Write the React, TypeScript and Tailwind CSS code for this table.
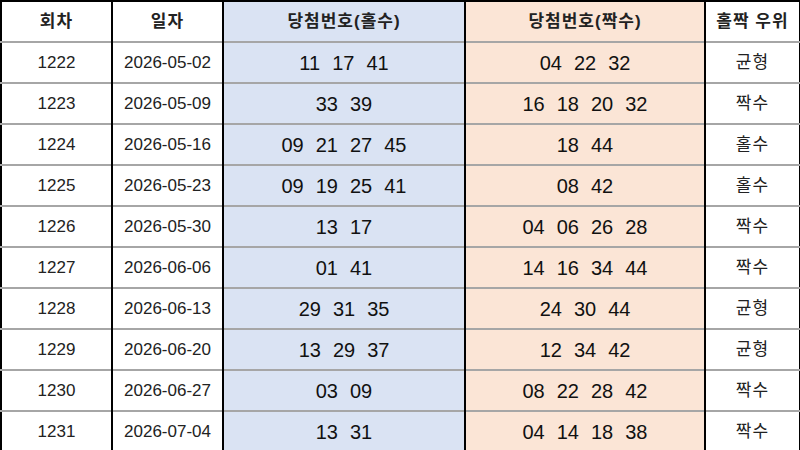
const rows = [
  { no: 1222, date: '2026-05-02', odd: ['11', '17', '41'], even: ['04', '22', '32'], result: '균형' },
  { no: 1223, date: '2026-05-09', odd: ['33', '39'], even: ['16', '18', '20', '32'], result: '짝수' },
  { no: 1224, date: '2026-05-16', odd: ['09', '21', '27', '45'], even: ['18', '44'], result: '홀수' },
  { no: 1225, date: '2026-05-23', odd: ['09', '19', '25', '41'], even: ['08', '42'], result: '홀수' },
  { no: 1226, date: '2026-05-30', odd: ['13', '17'], even: ['04', '06', '26', '28'], result: '짝수' },
  { no: 1227, date: '2026-06-06', odd: ['01', '41'], even: ['14', '16', '34', '44'], result: '짝수' },
  { no: 1228, date: '2026-06-13', odd: ['29', '31', '35'], even: ['24', '30', '44'], result: '균형' },
  { no: 1229, date: '2026-06-20', odd: ['13', '29', '37'], even: ['12', '34', '42'], result: '균형' },
  { no: 1230, date: '2026-06-27', odd: ['03', '09'], even: ['08', '22', '28', '42'], result: '짝수' },
  { no: 1231, date: '2026-07-04', odd: ['13', '31'], even: ['04', '14', '18', '38'], result: '짝수' },
]

const font = { fontFamily: '"Liberation Sans", "Noto Sans CJK KR", sans-serif' }

const Nums = ({ list }: { list: string[] }) => (
  <div className="flex justify-center gap-[12px] text-[20px] text-[#111]">
    {list.map((n, i) => <span key={i}>{n}</span>)}
  </div>
)

const App = () => {
  return (
    <div className="w-[800px] h-[450px] bg-white overflow-hidden" style={font}>
      <table className="border-collapse table-fixed w-[799px] border-l-2 border-r-2 border-t-2 border-black">
        <colgroup>
          <col className="w-[111px]" />
          <col className="w-[111px]" />
          <col className="w-[242px]" />
          <col className="w-[240px]" />
          <col className="w-[95px]" />
        </colgroup>
        <thead>
          <tr className="h-[41px] text-[17px] font-bold tracking-[1px] text-[#222]">
            <th className="border-r-2 border-black">회차</th>
            <th className="border-r-2 border-black">일자</th>
            <th className="border-r-2 border-black bg-[#dae3f3]">당첨번호(홀수)</th>
            <th className="border-r-2 border-black bg-[#fbe5d6]">당첨번호(짝수)</th>
            <th>홀짝 우위</th>
          </tr>
        </thead>
        <tbody>
          {rows.map(r => (
            <tr key={r.no} className="h-[41px] border-t-2 border-[#a6a6a6] text-center text-[17px] text-[#222]">
              <td className="border-r-2 border-r-black">{r.no}</td>
              <td className="border-r-2 border-r-black">{r.date}</td>
              <td className="border-r-2 border-r-black bg-[#dae3f3]"><Nums list={r.odd} /></td>
              <td className="border-r-2 border-r-black bg-[#fbe5d6]"><Nums list={r.even} /></td>
              <td className="tracking-[1px]">{r.result}</td>
            </tr>
          ))}
        </tbody>
      </table>
    </div>
  )
}

export default App
